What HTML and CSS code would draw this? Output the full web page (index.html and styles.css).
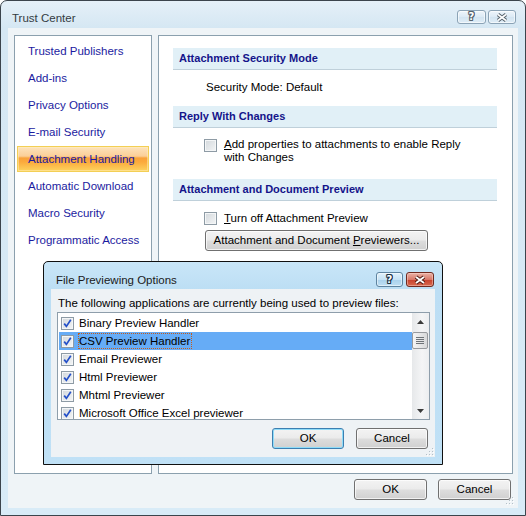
FILE: index.html
```html
<!DOCTYPE html>
<html>
<head>
<meta charset="utf-8">
<title>Trust Center</title>
<link rel="stylesheet" href="styles.css">
</head>
<body>
<div class="window">
  <div class="titlebar">
    <span class="title">Trust Center</span>
    <div class="caption">
      <span class="cbtn cbtn-help"><span class="qmark">?</span></span>
      <span class="cbtn cbtn-close">
        <svg width="14" height="9" viewBox="0 0 14 9"><path d="M3 1.5 L11 7.5 M11 1.5 L3 7.5" stroke="#56626c" stroke-width="3.6" fill="none"/><path d="M3 1.5 L11 7.5 M11 1.5 L3 7.5" stroke="#fff" stroke-width="1.6" fill="none"/></svg>
      </span>
    </div>
  </div>
  <div class="client">
    <div class="panels">
      <ul class="nav">
        <li>Trusted Publishers</li>
        <li>Add-ins</li>
        <li>Privacy Options</li>
        <li>E-mail Security</li>
        <li class="selected">Attachment Handling</li>
        <li>Automatic Download</li>
        <li>Macro Security</li>
        <li>Programmatic Access</li>
      </ul>
      <div class="main">
        <div class="hdr hdr-first">Attachment Security Mode</div>
        <div class="sec sec-mode">Security Mode: Default</div>
        <div class="hdr">Reply With Changes</div>
        <div class="sec sec-reply">
          <div class="chkrow"><span class="chk"></span><span><u>A</u>dd properties to attachments to enable Reply<br>with Changes</span></div>
        </div>
        <div class="hdr">Attachment and Document Preview</div>
        <div class="sec sec-preview">
          <div class="chkrow"><span class="chk"></span><span><u>T</u>urn off Attachment Preview</span></div>
          <button class="btn btn-wide">Attachment and Document <u>P</u>reviewers...</button>
        </div>
      </div>
    </div>
    <div class="footer">
      <button class="btn">OK</button>
      <button class="btn">Cancel</button>
    </div>
    <span class="grip grip-main">
      <svg width="8" height="8" viewBox="0 0 8 8"><g fill="#b4c0c8"><rect x="6" y="0" width="1" height="1"/><rect x="6" y="3" width="1" height="1"/><rect x="3" y="3" width="1" height="1"/><rect x="6" y="6" width="1" height="1"/><rect x="3" y="6" width="1" height="1"/><rect x="0" y="6" width="1" height="1"/></g><g fill="#fff"><rect x="7" y="1" width="1" height="1"/><rect x="7" y="4" width="1" height="1"/><rect x="4" y="4" width="1" height="1"/><rect x="7" y="7" width="1" height="1"/><rect x="4" y="7" width="1" height="1"/><rect x="1" y="7" width="1" height="1"/></g></svg>
    </span>
  </div>

  <div class="dialog">
    <div class="dlg-titlebar">
      <span class="dlg-title">File Previewing Options</span>
      <div class="dlg-caption">
        <span class="dbtn dbtn-help"><span class="qmark qmark-active">?</span></span>
        <span class="dbtn dbtn-close">
          <svg width="14" height="10" viewBox="0 0 14 10"><path d="M3 2 L11 8 M11 2 L3 8" stroke="#4a1810" stroke-width="3.8" fill="none"/><path d="M3 2 L11 8 M11 2 L3 8" stroke="#fff" stroke-width="1.9" fill="none"/></svg>
        </span>
      </div>
    </div>
    <div class="dlg-client">
      <div class="dlg-label">The following applications are currently being used to preview files:</div>
      <div class="listbox">
        <div class="items">
          <div class="item"><span class="chk chk-on"><svg width="9" height="9" viewBox="0 0 9 9"><path d="M1.2 4.6 L3.4 7.4 L7.8 0.8" fill="none" stroke="#2450c8" stroke-width="1.7"/></svg></span><span class="itext">Binary Preview Handler</span></div>
          <div class="item item-sel"><span class="chk chk-on"><svg width="9" height="9" viewBox="0 0 9 9"><path d="M1.2 4.6 L3.4 7.4 L7.8 0.8" fill="none" stroke="#2450c8" stroke-width="1.7"/></svg></span><span class="itext focus">CSV Preview Handler</span></div>
          <div class="item"><span class="chk chk-on"><svg width="9" height="9" viewBox="0 0 9 9"><path d="M1.2 4.6 L3.4 7.4 L7.8 0.8" fill="none" stroke="#2450c8" stroke-width="1.7"/></svg></span><span class="itext">Email Previewer</span></div>
          <div class="item"><span class="chk chk-on"><svg width="9" height="9" viewBox="0 0 9 9"><path d="M1.2 4.6 L3.4 7.4 L7.8 0.8" fill="none" stroke="#2450c8" stroke-width="1.7"/></svg></span><span class="itext">Html Previewer</span></div>
          <div class="item"><span class="chk chk-on"><svg width="9" height="9" viewBox="0 0 9 9"><path d="M1.2 4.6 L3.4 7.4 L7.8 0.8" fill="none" stroke="#2450c8" stroke-width="1.7"/></svg></span><span class="itext">Mhtml Previewer</span></div>
          <div class="item"><span class="chk chk-on"><svg width="9" height="9" viewBox="0 0 9 9"><path d="M1.2 4.6 L3.4 7.4 L7.8 0.8" fill="none" stroke="#2450c8" stroke-width="1.7"/></svg></span><span class="itext">Microsoft Office Excel previewer</span></div>
        </div>
        <div class="scrollbar">
          <div class="sb-btn"><svg width="7" height="4" viewBox="0 0 7 4"><polygon points="0,4 3.5,0 7,4" fill="#3a3a3a"/></svg></div>
          <div class="sb-thumb"><span></span><span></span><span></span><span></span></div>
          <div class="sb-space"></div>
          <div class="sb-btn"><svg width="7" height="4" viewBox="0 0 7 4"><polygon points="0,0 7,0 3.5,4" fill="#3a3a3a"/></svg></div>
        </div>
      </div>
      <div class="dlg-footer">
        <button class="btn btn-dlg btn-default">OK</button>
        <button class="btn btn-dlg">Cancel</button>
      </div>
      <span class="grip grip-dlg">
        <svg width="8" height="8" viewBox="0 0 8 8"><g fill="#b4c0c8"><rect x="6" y="0" width="1" height="1"/><rect x="6" y="3" width="1" height="1"/><rect x="3" y="3" width="1" height="1"/><rect x="6" y="6" width="1" height="1"/><rect x="3" y="6" width="1" height="1"/><rect x="0" y="6" width="1" height="1"/></g><g fill="#fff"><rect x="7" y="1" width="1" height="1"/><rect x="7" y="4" width="1" height="1"/><rect x="4" y="4" width="1" height="1"/><rect x="7" y="7" width="1" height="1"/><rect x="4" y="7" width="1" height="1"/><rect x="1" y="7" width="1" height="1"/></g></svg>
      </span>
    </div>
  </div>
</div>
</body>
</html>
```

FILE: styles.css
```css
* { box-sizing: border-box; }

body {
  margin: 0;
  font-family: "Liberation Sans", Arial, sans-serif;
  font-size: 11.5px;
  color: #000;
  background: #fff;
}

.window {
  position: relative;
  width: 526px;
  height: 516px;
  border: 1px solid #3b444c;
  border-radius: 7px 7px 0 0;
  background: linear-gradient(#e5f0f8 0, #d5e7f3 27px, #d8ebf7 100%);
  padding: 0 7px 7px 7px;
  display: flex;
  flex-direction: column;
}

.titlebar {
  height: 27px;
  flex: none;
  display: flex;
  align-items: flex-start;
  justify-content: space-between;
}

.title {
  padding: 10px 0 0 4px;
  line-height: 14px;
  color: #333b42;
}

.caption {
  display: flex;
  gap: 2px;
  margin: 9px 2px 0 0;
}

.cbtn {
  height: 14px;
  border: 1px solid #8ba3b6;
  border-radius: 3px;
  background: linear-gradient(#eef5fb, #dceaf5 50%, #d2e4f1 51%, #e0edf7);
  display: flex;
  align-items: center;
  justify-content: center;
  box-shadow: inset 0 0 0 1px rgba(255,255,255,0.6);
}
.cbtn-help { width: 29px; }
.cbtn-close { width: 28px; }

.qmark {
  font-family: "DejaVu Sans", sans-serif;
  font-weight: bold;
  font-size: 10px;
  line-height: 10px;
  color: #fff;
  text-shadow: 1px 0 #56626c, -1px 0 #56626c, 0 1px #56626c, 0 -1px #56626c,
               1px 1px #56626c, -1px -1px #56626c, 1px -1px #56626c, -1px 1px #56626c;
}
.qmark-active {
  text-shadow: 1px 0 #1f3345, -1px 0 #1f3345, 0 1px #1f3345, 0 -1px #1f3345,
               1px 1px #1f3345, -1px -1px #1f3345, 1px -1px #1f3345, -1px 1px #1f3345;
}

.client {
  position: relative;
  flex: 1;
  background: #eff4f7;
  padding: 7px 5px 0 6px;
  display: flex;
  flex-direction: column;
}

.panels {
  height: 439px;
  display: flex;
  gap: 6px;
}

.nav {
  list-style: none;
  margin: 0;
  padding: 2px 0 0 0;
  width: 138px;
  flex: none;
  background: #fff;
  border: 1px solid #8ba0ae;
}

.nav li {
  height: 26px;
  margin: 0 2px 1px 2px;
  padding-left: 10px;
  border: 1px solid transparent;
  line-height: 24px;
  color: #1b1ba0;
  white-space: nowrap;
}

.nav li.selected {
  border-color: #f3cf55;
  background: linear-gradient(#fde3bc 0%, #fbcf98 38%, #f9a23a 46%, #fbaa3c 62%, #fdd35e 100%);
  box-shadow: inset 0 0 0 1px rgba(255, 240, 190, 0.5);
}

.main {
  flex: 1;
  background: #fff;
  border: 1px solid #8ba0ae;
}

.hdr {
  height: 22px;
  margin: 0 15px 0 14px;
  padding-left: 6px;
  background: #e1f0f7;
  border-bottom: 1px solid #bfd0da;
  line-height: 21px;
  font-weight: bold;
  font-size: 11px;
  color: #14148a;
}
.hdr-first { margin-top: 12px; }

.sec { margin-left: 14px; }

.sec-mode {
  padding: 10px 0 12px 33px;
  line-height: 14px;
}

.sec-reply {
  padding: 10px 0 15px 31px;
}

.sec-preview {
  padding: 11px 0 0 31px;
}

.chkrow {
  display: flex;
  gap: 7px;
  line-height: 13px;
}

.chk {
  flex: none;
  width: 13px;
  height: 13px;
  margin-top: 1px;
  border: 1px solid #8e9ba5;
  background: linear-gradient(135deg, #d3d8dc, #f3f5f6);
  box-shadow: inset 0 0 0 1px #f4f6f7;
  display: flex;
  align-items: center;
  justify-content: center;
}

.sec-preview .chk { margin-top: 0; }

.btn {
  font-family: inherit;
  font-size: 11.5px;
  color: #000;
  height: 21px;
  width: 73px;
  padding: 0;
  border: 1px solid #707070;
  border-radius: 3px;
  background: linear-gradient(#f3f3f3 0%, #ebebeb 48%, #dddddd 52%, #d0d0d0 100%);
  box-shadow: inset 0 0 0 1px rgba(255,255,255,0.7);
  line-height: 19px;
}

.btn-wide {
  display: block;
  width: 223px;
  margin: 5px 0 0 1px;
}

.footer {
  display: flex;
  justify-content: flex-end;
  gap: 11px;
  margin-top: 5px;
  padding-right: 2px;
}

.grip {
  position: absolute;
  display: block;
  width: 8px;
  height: 8px;
  line-height: 0;
}
.grip-main { right: 4px; bottom: 3px; }
.grip-dlg { right: 1px; bottom: 1px; }

/* Dialog overlay */
.dialog {
  position: absolute;
  left: 42px;
  top: 260px;
  width: 400px;
  height: 204px;
  border: 1px solid #101010;
  border-radius: 5px 5px 0 0;
  background: linear-gradient(#c9e6f8 0, #bcdef4 28px, #c0e1f6 100%);
  padding: 0 7px 7px 7px;
  display: flex;
  flex-direction: column;
}

.dlg-titlebar {
  height: 27px;
  flex: none;
  display: flex;
  align-items: flex-start;
  justify-content: space-between;
}

.dlg-title {
  padding: 11px 0 0 5px;
  line-height: 14px;
  color: #1a1a1a;
}

.dlg-caption {
  display: flex;
  gap: 3px;
  margin: 10px 1px 0 0;
}

.dbtn {
  height: 15px;
  border-radius: 3px;
  display: flex;
  align-items: center;
  justify-content: center;
}
.dbtn-help {
  width: 27px;
  border: 1px solid #5e84a0;
  background: linear-gradient(#e1f1fb, #c7e3f5 50%, #a9d1ec 51%, #bfdff3);
  box-shadow: inset 0 0 0 1px rgba(255,255,255,0.5);
}
.dbtn-close {
  width: 28px;
  border: 1px solid #6f2a20;
  background: linear-gradient(#eab2a6, #d9796a 50%, #c7402c 51%, #d86a4e);
  box-shadow: inset 0 0 0 1px rgba(255,220,210,0.45);
}

.dlg-client {
  position: relative;
  flex: 1;
  background: #eef2f5;
  padding: 7px 5px 0 6px;
  display: flex;
  flex-direction: column;
}

.dlg-label {
  line-height: 14px;
  padding-left: 1px;
  white-space: nowrap;
}

.listbox {
  margin-top: 2px;
  height: 108px;
  border: 1px solid #8e9eab;
  background: #fff;
  display: flex;
  overflow: hidden;
}

.items {
  flex: 1;
  padding: 1px 0 0 1px;
  overflow: hidden;
}

.item {
  height: 18px;
  display: flex;
  align-items: center;
  padding-left: 2px;
  gap: 5px;
  white-space: nowrap;
}
.item .chk { margin-top: 0; }

.item-sel { background: #66acf6; }

.itext {
  line-height: 14px;
  padding: 0 1px 0 0;
  border: 1px solid transparent;
  margin-left: -1px;
}
.itext.focus { border: 1px dotted #c25c1e; }

.scrollbar {
  width: 17px;
  flex: none;
  background: linear-gradient(90deg, #e6e8ea, #f4f5f6 60%, #eceef0);
  display: flex;
  flex-direction: column;
}

.sb-btn {
  height: 17px;
  display: flex;
  align-items: center;
  justify-content: center;
  line-height: 0;
}

.sb-thumb {
  margin: 2px 1px 0 0;
  height: 17px;
  border: 1px solid #979a9e;
  border-radius: 2px;
  background: linear-gradient(90deg, #f5f5f5, #e5e6e7 55%, #d8d9da);
  display: flex;
  flex-direction: column;
  align-items: center;
  justify-content: center;
  gap: 1px;
}
.sb-thumb span {
  display: block;
  width: 8px;
  height: 1px;
  background: #6e7378;
}

.sb-space { flex: 1; }

.dlg-footer {
  display: flex;
  justify-content: flex-end;
  gap: 12px;
  margin-top: 8px;
  padding-right: 2px;
}

.btn-dlg { width: 72px; }

.btn-default {
  border-color: #3c7fb1;
  box-shadow: inset 0 0 0 1px #8fdcf8;
}
```
